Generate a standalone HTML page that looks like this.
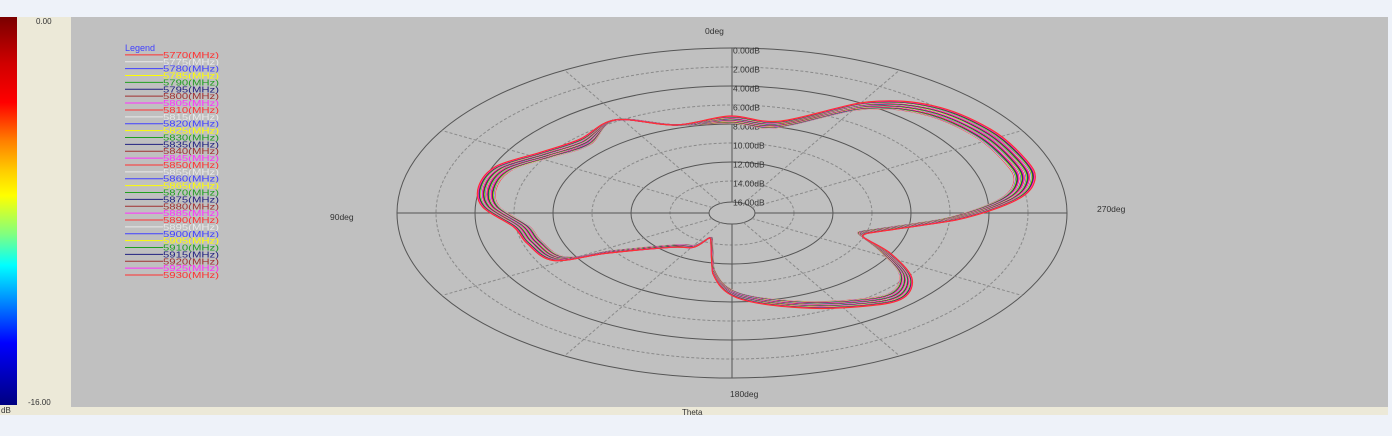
<!DOCTYPE html>
<html><head><meta charset="utf-8"><style>
html,body{margin:0;padding:0;background:#eef2f9;width:1392px;height:436px;overflow:hidden;font-family:"Liberation Sans",sans-serif}
#cb{position:absolute;left:0;top:17px;width:17px;height:388px;background:linear-gradient(#7a0000 0%,#d00000 12%,#ff0000 22%,#ff8000 32%,#ffd000 40%,#ffff00 46%,#80ff80 56%,#00ffff 64%,#0080ff 74%,#0000ff 84%,#000080 100%)}
#beige{position:absolute;left:17px;top:17px;width:54px;height:390px;background:#ece9d8}
#plot{position:absolute;left:71px;top:17px;width:1317px;height:390px;background:#c0c0c0}
#bot{position:absolute;left:0;top:405px;width:1388px;height:10px;background:#ece9d8}
.t{position:absolute;font-size:8px;color:#333}
</style></head><body>
<div id="cb"></div><div id="beige"></div><div id="bot"></div><div id="plot"></div>
<div class="t" style="left:36px;top:17px">0.00</div>
<div class="t" style="left:28px;top:398px">-16.00</div>
<div class="t" style="left:1px;top:406px">dB</div>
<div class="t" style="left:682px;top:408px">Theta</div>
<svg id="s" width="1392" height="436" style="position:absolute;left:0;top:0" font-family="Liberation Sans, sans-serif"></svg>
<script>
var s=document.getElementById('s'),h='';
var cx=732,cy=213;
for(var k=0;k<9;k++){var rx=335-39*k,ry=165-19*k;if(k==8){rx=23;ry=11;}
h+='<ellipse cx="'+cx+'" cy="'+cy+'" rx="'+rx+'" ry="'+ry+'" fill="none" stroke="'+(k%2?'#8a8a8a':'#555')+'" stroke-width="1" '+(k%2?'stroke-dasharray="3,2"':'')+'/>';}
for(var a=30;a<360;a+=30){if(a%90==0)continue;var r=a*Math.PI/180;
h+='<line x1="'+(cx+23*Math.cos(r))+'" y1="'+(cy+11*Math.sin(r))+'" x2="'+(cx+335*Math.cos(r))+'" y2="'+(cy+165*Math.sin(r))+'" stroke="#8a8a8a" stroke-dasharray="3,2"/>';}
h+='<line x1="397" y1="213" x2="709" y2="213" stroke="#555"/><line x1="755" y1="213" x2="1067" y2="213" stroke="#555"/>';
h+='<line x1="732" y1="48" x2="732" y2="202" stroke="#555"/><line x1="732" y1="224" x2="732" y2="378" stroke="#555"/>';
var lb=['0.00dB','2.00dB','4.00dB','6.00dB','8.00dB','10.00dB','12.00dB','14.00dB','16.00dB'];
for(k=0;k<9;k++)h+='<text x="733" y="'+(53.5+19*k)+'" font-size="8.5" fill="#333">'+lb[k]+'</text>';
h+='<text x="705" y="34" font-size="8.5" fill="#333">0deg</text><text x="330" y="220" font-size="8.5" fill="#333">90deg</text><text x="1097" y="212" font-size="8.5" fill="#333">270deg</text><text x="730" y="397" font-size="8.5" fill="#333">180deg</text>';
var P=[[615,120],[676,125],[730,117],[780,122],[867,103],[932,107],[988,130],[1023,160],[1032,180],[1014,200],[954,220],[867,233],[863,237],[889,253],[910,277],[902,297],[867,305],[802,307],[737,297],[713,273],[711,240],[709,238],[694,247],[672,247],[607,253],[555,260],[529,243],[516,227],[485,207],[481,187],[498,167],[542,153],[581,140]];
var C=['#ff3030','#f0f0f0','#4040ff','#ffff00','#20a020','#202080','#a03030','#ff30ff'];
function path(Q){var n=Q.length,d='M'+Q[0][0].toFixed(1)+','+Q[0][1].toFixed(1);
for(var j=0;j<n;j++){var p0=Q[(j-1+n)%n],p1=Q[j],p2=Q[(j+1)%n],p3=Q[(j+2)%n];
var t=(j==11||j==20||j==10||j==19)?0.05:1/6;
var t2=(j+1==12||j+1==21||j+1==11||j+1==20)?0.05:1/6;
d+=' C'+(p1[0]+(p2[0]-p0[0])*t).toFixed(1)+','+(p1[1]+(p2[1]-p0[1])*t).toFixed(1)+' '+(p2[0]-(p3[0]-p1[0])*t2).toFixed(1)+','+(p2[1]-(p3[1]-p1[1])*t2).toFixed(1)+' '+p2[0].toFixed(1)+','+p2[1].toFixed(1);}
return d+'Z';}
for(var i=0;i<33;i++){var f=0.94+0.07*(i/32),Q=[];
for(var j=0;j<P.length;j++){var x=P[j][0],y=P[j][1],ff=(j==12||j==21||j==1||j==0)?1:f;Q.push([cx+(x-cx)*ff,cy+(y-cy)*ff]);}
h+='<path d="'+path(Q)+'" fill="none" stroke="'+C[i%8]+'" stroke-width="1.2"/>';}
h+='<text x="125" y="51" font-size="9" fill="#4040ff">Legend</text>';
for(i=0;i<33;i++){var y=54.9+6.88*i;var c=C[i%8]=='#f0f0f0'?'#e8e8e8':C[i%8];
h+='<line x1="125" y1="'+y+'" x2="163" y2="'+y+'" stroke="'+c+'"/><text x="163" y="'+(y+3)+'" font-size="8.5" textLength="56" lengthAdjust="spacingAndGlyphs" fill="'+c+'">'+(5770+5*i)+'(MHz)</text>';}
s.innerHTML=h;
</script>
</body></html>
